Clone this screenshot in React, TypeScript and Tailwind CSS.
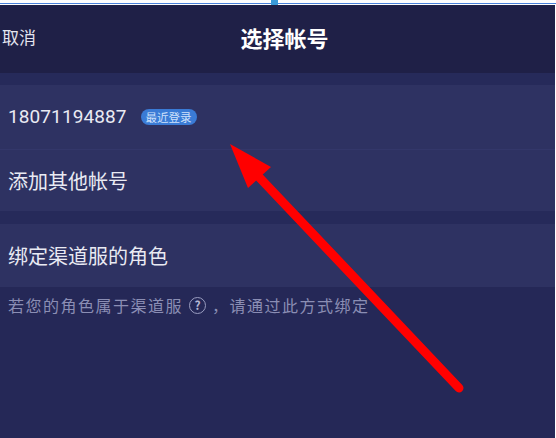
const cjk = { fontFamily: '"Noto Sans CJK SC", "Noto Sans", sans-serif' };

function Row({ h, children }: { h: string; children: React.ReactNode }) {
  return (
    <div className={`flex items-center bg-[#2e3262] pl-2 text-[20px] text-[#e9eaf3] ${h}`}>
      {children}
    </div>
  );
}

function Arrow() {
  return (
    <svg className="pointer-events-none absolute left-0 top-0" width="556" height="438" viewBox="0 0 556 438">
      <line x1="258" y1="176" x2="459" y2="388" stroke="#ff0000" strokeWidth="9" strokeLinecap="round" />
      <polygon points="230,144 271,167 248,188" fill="#ff0000" />
    </svg>
  );
}

export default function App() {
  return (
    <div className="relative h-[438px] w-[556px] overflow-hidden bg-white" style={cjk}>
      <div className="relative h-[5px] bg-white">
        <div className="absolute left-0 right-0 top-[3px] h-px bg-[#4a82dc]" />
        <div className="absolute left-[271px] top-0 h-[6px] w-[7px] bg-[#3a9ad9]" />
      </div>
      <div className="mr-px flex h-[433px] flex-col bg-[#252857]">
        <header className="relative flex h-[68px] items-center justify-center bg-[#1f2047] pb-[4px] pl-[14px]">
          <span className="absolute left-[2px] text-[17px] text-[#e4e5ef]">取消</span>
          <h1 className="text-[22px] font-bold text-white">选择帐号</h1>
        </header>
        <div className="h-[12px] bg-[#262a5a]" />
        <Row h="h-[64px]">
          <span className="text-[19px] tracking-[0.1px]" style={{ fontFamily: '"Roboto", sans-serif' }}>
            18071194887
          </span>
          <span className="ml-[14px] rounded-full bg-[#3a7bd6] px-[5px] text-[11.5px] leading-[16px] text-[#cfe1fb]">
            最近登录
          </span>
        </Row>
        <div className="h-px bg-[#33376a]" />
        <Row h="h-[61px]">添加其他帐号</Row>
        <div className="h-[13px] bg-[#262a5a]" />
        <Row h="h-[63px]">绑定渠道服的角色</Row>
        <p className="mt-[6px] flex items-center pl-2 text-[16px] tracking-[1.5px] text-[#8b8eb4]">
          若您的角色属于渠道服
          <span className="mx-[6px] flex h-[17px] w-[17px] items-center justify-center rounded-full border-[1.5px] border-[#9a9dc0] text-[12px] font-bold tracking-normal text-[#b6b8d4]">
            ?
          </span>
          ，请通过此方式绑定
        </p>
      </div>
      <Arrow />
    </div>
  );
}
